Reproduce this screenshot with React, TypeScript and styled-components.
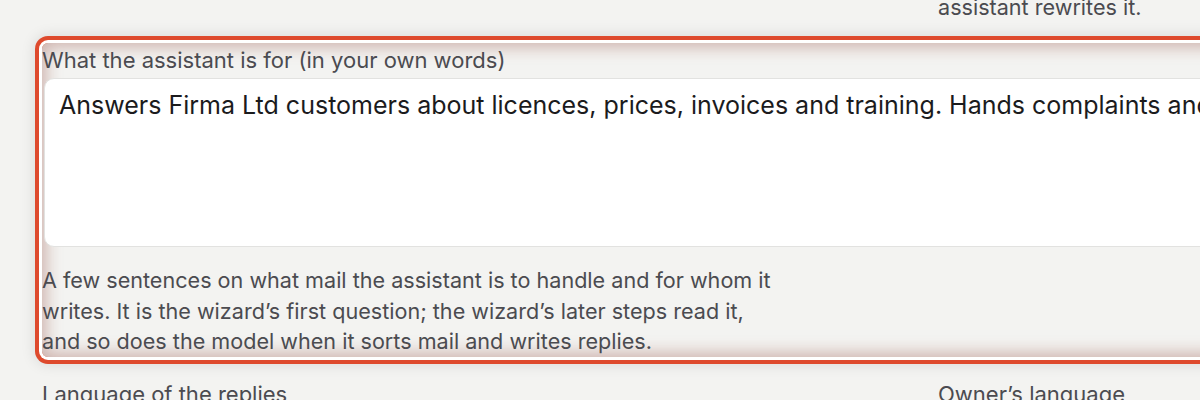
import styled, { createGlobalStyle } from 'styled-components';

const GlobalStyle = createGlobalStyle`
  html, body {
    margin: 0;
    padding: 0;
    background: #f3f3f1;
    overflow: hidden;
  }

  body {
    font-family: Inter, "Noto Sans", "Liberation Sans", sans-serif;
    color: #4b4b50;
    -webkit-font-smoothing: antialiased;
  }
`;

const Page = styled.div`
  width: 1794px;
  padding: 0 0 0 42px;
  margin-top: -8px;
`;

const FormGrid = styled.div`
  display: grid;
  grid-template-columns: 856px 856px;
  column-gap: 40px;
  row-gap: 20px;
`;

const Hint = styled.p<{ $column?: number }>`
  margin: 0;
  grid-column: ${(p) => p.$column ?? 1};
  max-width: 740px;
  font-size: 21.6px;
  line-height: 30.5px;
  color: #4b4b50;
`;

const Field = styled.div<{ $highlight?: boolean; $wide?: boolean }>`
  grid-column: ${(p) => (p.$wide ? '1 / -1' : 'auto')};
  display: flex;
  flex-direction: column;
  padding-top: 3px;
  border-radius: 6px;
  ${(p) =>
    p.$highlight &&
    `
    box-shadow:
      inset 0 0 16px 4px rgba(150, 80, 70, 0.4),
      0 0 0 3px #ffffff,
      0 0 0 7px #de4a2d,
      0 0 14px 8px rgba(0, 0, 0, 0.1);
  `}
`;

const Label = styled.label`
  font-size: 22px;
  line-height: 28px;
  font-weight: 400;
  color: #4b4b50;
`;

const TextArea = styled.textarea`
  margin: 4px 0 0 2px;
  box-sizing: border-box;
  height: 169px;
  padding: 10px 14px;
  border: 1px solid #e2e2e0;
  border-radius: 10px;
  background: #ffffff;
  font-family: inherit;
  font-size: 25px;
  line-height: 1.3;
  color: #1b1b1d;
  resize: none;
  outline: none;
  overflow: hidden;
  white-space: nowrap;
`;

const FieldHint = styled(Hint)`
  margin-top: 18.5px;
`;

export default function App() {
  return (
    <>
      <GlobalStyle />
      <Page>
        <FormGrid>
          <Hint $column={2}>assistant rewrites it.</Hint>

          <Field $highlight $wide>
            <Label>What the assistant is for (in your own words)</Label>
            <TextArea
              readOnly
              defaultValue="Answers Firma Ltd customers about licences, prices, invoices and training. Hands complaints and disputes to the owner."
            />
            <FieldHint>
              A few sentences on what mail the assistant is to handle and for whom it
              writes. It is the wizard’s first question; the wizard’s later steps read it,
              and so does the model when it sorts mail and writes replies.
            </FieldHint>
          </Field>

          <Field>
            <Label>Language of the replies</Label>
          </Field>
          <Field>
            <Label>Owner’s language</Label>
          </Field>
        </FormGrid>
      </Page>
    </>
  );
}
